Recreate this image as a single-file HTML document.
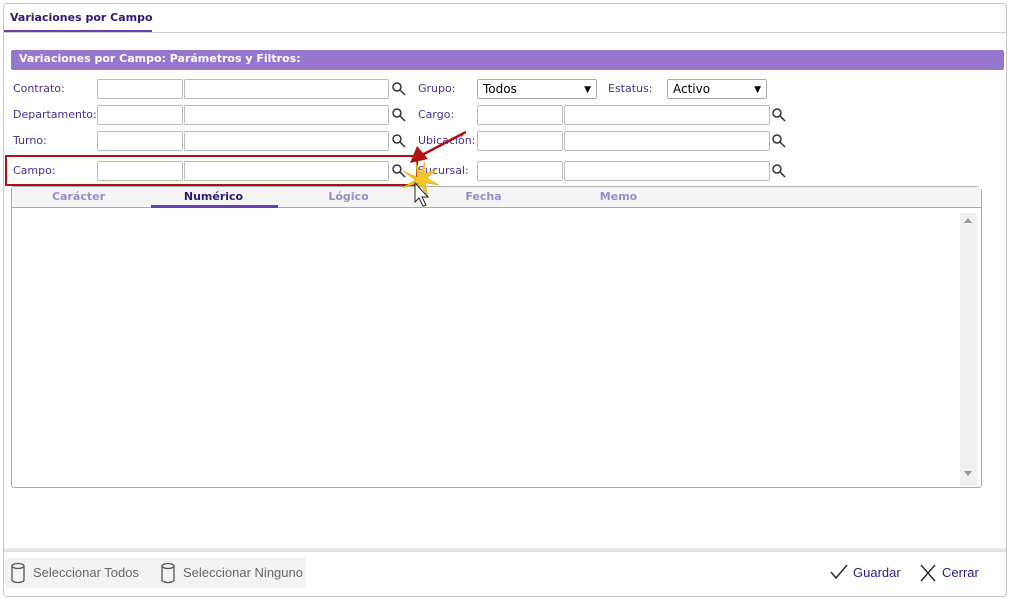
<!DOCTYPE html>
<html><head><meta charset="utf-8"><style>
*{box-sizing:border-box;margin:0;padding:0}
body{width:1009px;height:599px;background:#fff;position:relative;overflow:hidden;font-family:"DejaVu Sans","Liberation Sans",sans-serif;font-size:11px;color:#3a2a8a}
.a{position:absolute}
.panel{left:3px;top:3px;width:1004px;height:594px;border:1px solid #c8c8c8;border-radius:4px}
.in{position:absolute;height:20px;border:1px solid #bbb;border-radius:2px;background:#fff}
.lbl{position:absolute;font-size:11px;color:#4a2f9a;line-height:14px}
.sel{position:absolute;height:20px;border:1px solid #aaa;border-radius:2px;background:#fff;font-size:12px;color:#000;padding:1px 5px;line-height:16px}
.sel:after{content:"▼";position:absolute;right:5px;top:2px;font-size:9px}
.tab{position:absolute;top:190px;width:135px;text-align:center;font-weight:bold;color:#9a8cc8;font-size:11px}
</style></head><body>
<div class="a panel"></div>
<div class="a" style="left:10px;top:11px;font-weight:bold;color:#2d1a78;font-size:11px">Variaciones por Campo</div>
<div class="a" style="left:4px;top:30px;width:148px;height:3px;background:#6a3fb5"></div>
<div class="a" style="left:4px;top:32px;width:1002px;height:1px;background:#ccc"></div>
<div class="a" style="left:11px;top:50px;width:993px;height:20px;background:#9677cf;border-radius:2px;color:#fff;font-weight:bold;padding:2px 8px;font-size:11px">Variaciones por Campo: Parámetros y Filtros:</div>

<div class="lbl" style="left:13px;top:82px">Contrato:</div>
<div class="lbl" style="left:13px;top:108px">Departamento:</div>
<div class="lbl" style="left:13px;top:134px">Turno:</div>
<div class="lbl" style="left:13px;top:164px">Campo:</div>
<div class="in" style="left:97px;top:79px;width:86px"></div><div class="in" style="left:184px;top:79px;width:205px"></div>
<div class="in" style="left:97px;top:105px;width:86px"></div><div class="in" style="left:184px;top:105px;width:205px"></div>
<div class="in" style="left:97px;top:131px;width:86px"></div><div class="in" style="left:184px;top:131px;width:205px"></div>
<div class="in" style="left:97px;top:161px;width:86px"></div><div class="in" style="left:184px;top:161px;width:205px"></div>

<div class="lbl" style="left:418px;top:82px">Grupo:</div>
<div class="sel" style="left:477px;top:79px;width:120px">Todos</div>
<div class="lbl" style="left:608px;top:82px">Estatus:</div>
<div class="sel" style="left:667px;top:79px;width:100px">Activo</div>
<div class="lbl" style="left:418px;top:108px">Cargo:</div>
<div class="lbl" style="left:418px;top:134px">Ubicación:</div>
<div class="lbl" style="left:418px;top:164px">Sucursal:</div>
<div class="in" style="left:477px;top:105px;width:86px"></div><div class="in" style="left:564px;top:105px;width:206px"></div>
<div class="in" style="left:477px;top:131px;width:86px"></div><div class="in" style="left:564px;top:131px;width:206px"></div>
<div class="in" style="left:477px;top:161px;width:86px"></div><div class="in" style="left:564px;top:161px;width:206px"></div>

<div class="a" style="left:11px;top:186px;width:971px;height:302px;border:1px solid #aaa;border-radius:3px 6px 3px 3px"></div>
<div class="a" style="left:12px;top:187px;width:969px;height:21px;background:#f5f5f5;border-bottom:1px solid #aaa"></div>
<div class="tab" style="left:11px">Carácter</div>
<div class="tab" style="left:146px;color:#2d1a78">Numérico</div>
<div class="a" style="left:151px;top:205px;width:127px;height:3px;background:#6a3fb5"></div>
<div class="tab" style="left:281px">Lógico</div>
<div class="tab" style="left:416px">Fecha</div>
<div class="tab" style="left:551px">Memo</div>
<div class="a" style="left:960px;top:213px;width:17px;height:273px;background:#f0f0f0"></div>
<div class="a" style="left:964px;top:218px;width:0;height:0;border:4px solid transparent;border-bottom:5px solid #999;border-top:0"></div>
<div class="a" style="left:964px;top:471px;width:0;height:0;border:4px solid transparent;border-top:5px solid #999;border-bottom:0"></div>

<svg class="a" style="left:0;top:0;z-index:5" width="1009" height="599">
<g fill="none" stroke="#333" stroke-width="1.5">
<circle cx="397" cy="87" r="4"/><path d="M400 90l5 5"/>
<circle cx="397" cy="113" r="4"/><path d="M400 116l5 5"/>
<circle cx="397" cy="139" r="4"/><path d="M400 142l5 5"/>
<circle cx="397" cy="169" r="4"/><path d="M400 172l5 5"/>
<circle cx="777" cy="113" r="4"/><path d="M780 116l5 5"/>
<circle cx="777" cy="139" r="4"/><path d="M780 142l5 5"/>
<circle cx="777" cy="169" r="4"/><path d="M780 172l5 5"/>
</g>
<rect x="6" y="156" width="411" height="29" fill="none" stroke="#b01010" stroke-width="2"/>
<path d="M466 132L422 155" stroke="#b01010" stroke-width="2.5"/>
<path d="M410 163l7-17 11 13z" fill="#b01010"/>
<path d="M417 177l-14-6 12 9-13 8 16-5-3 13 6-11 7 12-3-14 14 2-12-7 10-9-13 5 1-12-5 11-4-11z" fill="#f3c62a" stroke="#d99b10" stroke-width=".5"/>
<path d="M415 183v19l4-4 4 8 3-1-4-8h6z" fill="#fff" stroke="#222" stroke-width="1"/>
</svg>

<div class="a" style="left:4px;top:548px;width:1002px;height:4px;background:linear-gradient(#eee,#ddd)"></div>
<div class="a" style="left:5px;top:558px;width:301px;height:30px;background:#f3f3f3"></div>
<svg class="a" style="left:0;top:560px" width="1009" height="28">
<g fill="none" stroke="#555" stroke-width="1.3">
<path d="M12 6a6 2.5 0 0 1 12 0v14a6 2.5 0 0 1-12 0zM12 6a6 2.5 0 0 0 12 0"/>
<path d="M162 6a6 2.5 0 0 1 12 0v14a6 2.5 0 0 1-12 0zM162 6a6 2.5 0 0 0 12 0"/>
<path d="M831 12l5 6 11-13" stroke="#333" stroke-width="1.6"/>
<path d="M921 5l14 16M935 5l-14 16" stroke="#333" stroke-width="1.6"/>
</g></svg>
<div class="a" style="left:33px;top:565px;font-family:'Liberation Sans',sans-serif;font-size:13px;color:#666">Seleccionar Todos</div>
<div class="a" style="left:183px;top:565px;font-family:'Liberation Sans',sans-serif;font-size:13px;color:#666">Seleccionar Ninguno</div>
<div class="a" style="left:853px;top:565px;font-family:'Liberation Sans',sans-serif;font-size:13px;color:#2d1a8a">Guardar</div>
<div class="a" style="left:942px;top:565px;font-family:'Liberation Sans',sans-serif;font-size:13px;color:#2d1a8a">Cerrar</div>
</body></html>
